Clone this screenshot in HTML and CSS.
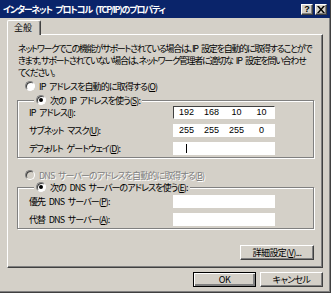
FILE: index.html
```html
<!DOCTYPE html>
<html lang="ja">
<head>
    <meta charset="UTF-8">
    <title>インターネット プロトコル (TCP/IP)のプロパティ</title>
    <link rel="stylesheet" href="styles.css">
</head>
<body>
    <div class="window">
        <div class="titlebar">
            <span class="title">インターネット プロトコル (TCP/IP)のプロパティ</span>
            <div class="caption-buttons">
                <span class="cap-btn">?</span>
                <span class="cap-btn">
                    <svg width="8" height="7" viewBox="0 0 8 7"><path d="M0 0h2l2 2.5L6 0h2L5 3.5 8 7H6L4 4.5 2 7H0l3-3.5z" fill="#000"/></svg>
                </span>
            </div>
        </div>

        <div class="client">
            <div class="tabs"><span class="tab">全般</span></div>

            <div class="panel">
                <p class="intro">ネットワークでこの機能がサポートされている場合は、IP 設定を自動的に取得することがで<br>きます。サポートされていない場合は、ネットワーク管理者に適切な IP 設定を問い合わせ<br>てください。</p>

                <div class="option first"><span class="radio"></span>IP アドレスを自動的に取得する(<u>O</u>)</div>

                <fieldset class="group ip-group">
                    <legend><span class="option"><span class="radio checked"></span>次の IP アドレスを使う(<u>S</u>):</span></legend>
                    <div class="field">
                        <span class="field-label">IP アドレス(<u>I</u>):</span>
                        <span class="ip-box focused"><span>192</span><span>168</span><span>10</span><span>10</span></span>
                    </div>
                    <div class="field">
                        <span class="field-label">サブネット マスク(<u>U</u>):</span>
                        <span class="ip-box"><span>255</span><span>255</span><span>255</span><span>0</span></span>
                    </div>
                    <div class="field">
                        <span class="field-label">デフォルト ゲートウェイ(<u>D</u>):</span>
                        <span class="ip-box"><span><i class="caret"></i></span><span></span><span></span><span></span></span>
                    </div>
                </fieldset>

                <div class="option disabled"><span class="radio"></span>DNS サーバーのアドレスを自動的に取得する(<u>B</u>)</div>

                <fieldset class="group dns-group">
                    <legend><span class="option"><span class="radio checked"></span>次の DNS サーバーのアドレスを使う(<u>E</u>):</span></legend>
                    <div class="field">
                        <span class="field-label">優先 DNS サーバー(<u>P</u>):</span>
                        <span class="ip-box"><span></span><span></span><span></span><span></span></span>
                    </div>
                    <div class="field">
                        <span class="field-label">代替 DNS サーバー(<u>A</u>):</span>
                        <span class="ip-box"><span></span><span></span><span></span><span></span></span>
                    </div>
                </fieldset>

                <div class="panel-actions">
                    <button class="btn advanced">詳細設定(<u>V</u>)...</button>
                </div>
            </div>

            <div class="dialog-actions">
                <button class="btn default">OK</button>
                <button class="btn">キャンセル</button>
            </div>
        </div>
    </div>
</body>
</html>
```

FILE: styles.css
```css
* {
    margin: 0;
    padding: 0;
    box-sizing: border-box;
}

body {
    font-family: "Noto Sans CJK JP", "Liberation Sans", sans-serif;
    font-size: 9px;
    font-feature-settings: "palt";
    letter-spacing: -0.9px;
    word-spacing: 2.5px;
    color: #000;
    background: #d4d0c8;
}

u {
    text-decoration: underline;
    text-underline-offset: 1px;
}

.window {
    width: 331px;
    height: 293px;
    background: #d4d0c8;
    border-right: 1px solid #404040;
    border-bottom: 1px solid #404040;
    box-shadow: inset -1px -1px 0 #808080;
    overflow: hidden;
}

/* title bar */
.titlebar {
    height: 18px;
    background: #0a246a;
    display: flex;
    align-items: center;
    justify-content: space-between;
    padding: 0 3px 0 3px;
}

.title {
    color: #fff;
    font-weight: bold;
    font-size: 9px;
    letter-spacing: -1.2px;
    white-space: nowrap;
}

.caption-buttons {
    display: flex;
    gap: 2px;
}

.cap-btn {
    width: 12px;
    height: 11px;
    background: #d4d0c8;
    border: 1px solid;
    border-color: #fff #404040 #404040 #fff;
    box-shadow: inset -1px -1px 0 #808080;
    display: flex;
    align-items: center;
    justify-content: center;
    font-family: "Liberation Sans", sans-serif;
    font-weight: bold;
    font-size: 9px;
    letter-spacing: 0;
    line-height: 1;
}

/* tabs + panel */
.client {
    padding: 2px 7px 0 7px;
}

.tabs {
    display: flex;
    height: 14px;
}

.tab {
    position: relative;
    z-index: 1;
    height: 15px;
    width: 34px;
    padding-left: 6px;
    line-height: 13px;
    letter-spacing: 0;
    background: #d4d0c8;
    border-top: 1px solid #fff;
    border-left: 1px solid #fff;
    border-right: 1px solid #404040;
    box-shadow: inset -1px 0 0 #808080;
    border-radius: 2px 2px 0 0;
}

.panel {
    height: 234px;
    padding: 8px 8px 0 9px;
    border-top: 1px solid #fff;
    border-left: 1px solid #fff;
    border-right: 1px solid #404040;
    border-bottom: 1px solid #404040;
    box-shadow: inset -1px -1px 0 #808080;
}

.intro {
    margin-left: 1px;
    line-height: 12px;
    letter-spacing: -1.25px;
    white-space: nowrap;
}

.option {
    display: flex;
    align-items: center;
    height: 12px;
    margin: 2px 0 0 8px;
    white-space: nowrap;
}

.option.first {
    margin-top: 1px;
}

.radio {
    width: 10px;
    height: 10px;
    margin-right: 4px;
    border-radius: 50%;
    border: 1px solid;
    border-color: #808080 #fff #fff #808080;
    box-shadow: inset 1px 1px 0 #404040;
    background: #fff;
    position: relative;
    flex-shrink: 0;
}

.radio.checked::after {
    content: "";
    position: absolute;
    left: 2px;
    top: 2px;
    width: 4px;
    height: 4px;
    border-radius: 50%;
    background: #000;
}

.option.disabled {
    margin-top: 11px;
    color: #808080;
    text-shadow: 1px 1px 0 #fff;
}

.option.disabled .radio {
    background: #d4d0c8;
}

/* group boxes */
.group {
    margin-top: 2px;
    border: 1px solid #808080;
    box-shadow: inset 1px 1px 0 #fff, 1px 1px 0 #fff;
    padding: 0 0 0 11px;
}

.dns-group {
    margin-top: 0;
}

.group legend {
    margin-left: 5px;
    padding: 0 2px;
    background: #d4d0c8;
}

.group legend .option {
    margin: 0;
}

.field {
    display: grid;
    grid-template-columns: 144px 102px;
    align-items: center;
    height: 18px;
}

.ip-group .field:first-of-type {
    margin-top: -3px;
}

.dns-group .field:first-of-type {
    margin-top: -1px;
}

.field-label {
    white-space: nowrap;
}

.ip-box {
    height: 13px;
    background: #fff;
    display: grid;
    grid-template-columns: repeat(4, 25px);
    padding-left: 1px;
    align-items: center;
    text-align: center;
    line-height: 11px;
    letter-spacing: 0;
    font-family: "Liberation Sans", sans-serif;
    font-size: 9px;
}

.ip-box.focused {
    border: 1px solid;
    border-color: #404040 #fff #fff #404040;
    padding-left: 0;
}

.caret {
    display: inline-block;
    width: 1px;
    height: 9px;
    background: #000;
    vertical-align: middle;
}

/* buttons */
.btn {
    height: 15px;
    font-family: inherit;
    font-size: 9px;
    font-feature-settings: "palt";
    letter-spacing: -0.6px;
    background: #d4d0c8;
    color: #000;
    border: 1px solid;
    border-color: #fff #404040 #404040 #fff;
    box-shadow: inset -1px -1px 0 #808080;
    line-height: 12px;
    padding: 0;
}

.btn.default {
    border: 1px solid #000;
    box-shadow: inset 1px 1px 0 #fff, inset -2px -2px 0 #808080, inset -1px -1px 0 #404040;
}

.panel-actions {
    display: flex;
    justify-content: flex-end;
    margin-top: 16px;
}

.btn.advanced {
    width: 74px;
}

.dialog-actions {
    display: flex;
    justify-content: flex-end;
    gap: 4px;
    margin-top: 4px;
}

.dialog-actions .btn {
    width: 63px;
}
```
